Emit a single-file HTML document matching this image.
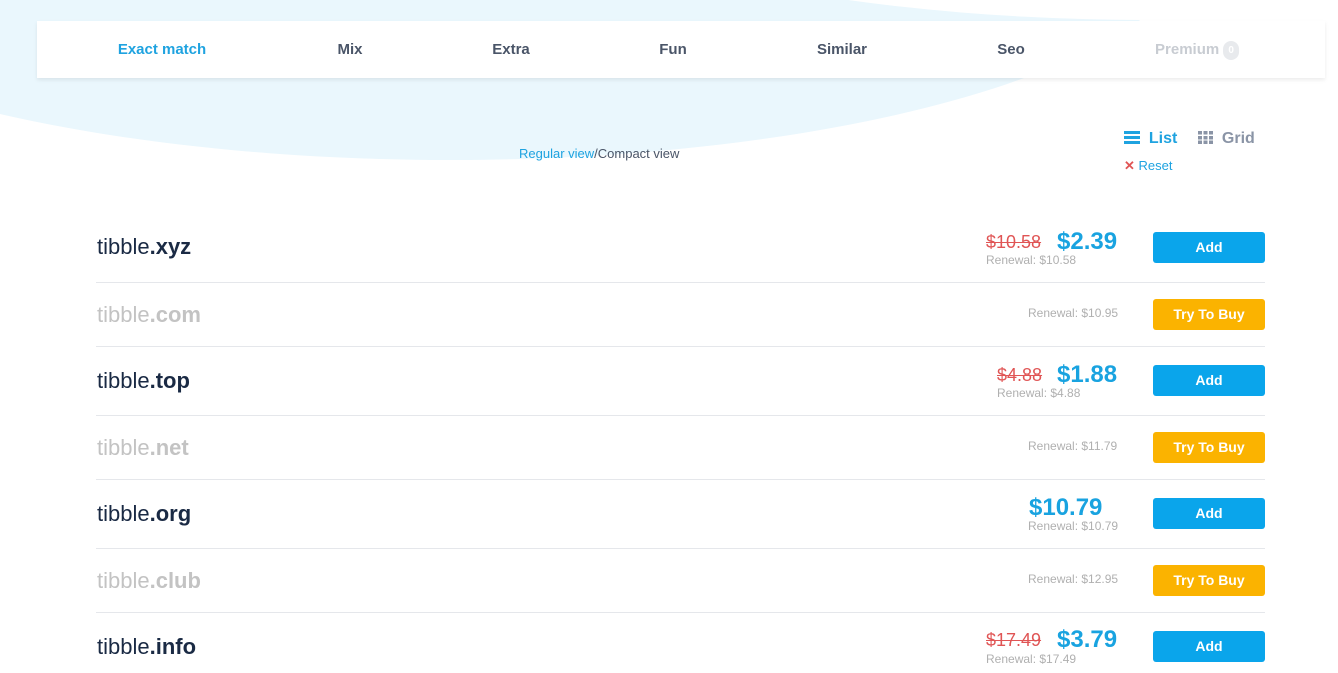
<!DOCTYPE html>
<html><head><style>
body{margin:0;width:1338px;height:664px;overflow:hidden;background:#fff;font-family:"Liberation Sans",sans-serif;position:relative}
.sw{position:absolute;left:-300px;top:-300px;width:1500px;height:460px;border-radius:50%;background:#eaf7fd}
.sw2{position:absolute;left:500px;top:-330px;width:1300px;height:350px;border-radius:50%;background:#fff}
.nav{position:absolute;left:37px;top:21px;width:1288px;height:57px;background:#fff;box-shadow:0 2px 4px rgba(0,0,0,.08)}
.nav span{position:absolute;top:20px;font-size:15px;font-weight:bold;color:#4a5568;transform:translateX(-50%)}
.vt{position:absolute;left:519px;top:146px;font-size:13px;color:#4a5568}
.row{position:absolute;left:96px;width:1169px;border-bottom:1px solid #e5e7eb}
.dn{position:absolute;left:1px;font-size:22px;color:#1a2a44}
.dn b{font-weight:bold}
.dim{color:#c3c3c3}
.btn{position:absolute;left:1057px;width:112px;height:31px;border-radius:3px;color:#fff;font-weight:bold;font-size:14px;text-align:center;line-height:30px}
.add{background:#0aa5eb}.try{background:#fbb300}
.old{position:absolute;font-size:18px;color:#e05555;text-decoration:line-through}
.pr{position:absolute;font-size:24px;font-weight:bold;color:#19a3e0}
.rn{position:absolute;font-size:12px;color:#b0b0b0}
</style></head><body>
<div class="sw"></div><div class="sw2"></div>
<div class="nav">
<span style="left:125px;color:#1fa3e0">Exact match</span>
<span style="left:313px">Mix</span>
<span style="left:474px">Extra</span>
<span style="left:636px">Fun</span>
<span style="left:805px">Similar</span>
<span style="left:974px">Seo</span>
<span style="left:1160px;color:#c8ccd2">Premium <span style="position:static;display:inline-block;transform:none;background:#e8eaed;color:#fff;border-radius:8px;font-size:10px;padding:4px 5px;vertical-align:1px">0</span></span>
</div>
<div class="vt"><span style="color:#1fa3e0">Regular view</span>/Compact view</div>
<div style="position:absolute;left:1124px;top:130px;font-size:16px;font-weight:bold;color:#1fa3e0">
<span style="display:inline-block;width:16px;height:13px;vertical-align:-1px;background:linear-gradient(#1fa3e0 0 3px,transparent 3px 5px,#1fa3e0 5px 8px,transparent 8px 10px,#1fa3e0 10px)"></span>&nbsp; List</div>
<div style="position:absolute;left:1198px;top:130px;font-size:16px;font-weight:bold;color:#8a94a6">
<span style="display:inline-block;width:15px;height:13px;vertical-align:-1px;background:repeating-linear-gradient(90deg,#8a94a6 0 4px,#fff 4px 5.5px),#8a94a6;-webkit-mask:repeating-linear-gradient(#000 0 3.5px,transparent 3.5px 4.8px)"></span>&nbsp; Grid</div>
<div style="position:absolute;left:1124px;top:158px;font-size:13px;color:#1fa3e0"><span style="color:#e05555;font-weight:bold">✕</span> Reset</div>

<div class="row" style="top:215px;height:67px"><div class="dn" style="top:19px">tibble<b>.xyz</b></div>
<div class="old" style="left:890px;top:17px">$10.58</div><div class="pr" style="left:961px;top:13px">$2.39</div><div class="rn" style="left:890px;top:38px">Renewal: $10.58</div>
<div class="btn add" style="top:17px">Add</div></div>
<div class="row" style="top:283px;height:63px"><div class="dn dim" style="top:19px">tibble<b>.com</b></div>
<div class="rn" style="left:932px;top:23px">Renewal: $10.95</div><div class="btn try" style="top:16px">Try To Buy</div></div>
<div class="row" style="top:347px;height:68px"><div class="dn" style="top:21px">tibble<b>.top</b></div>
<div class="old" style="left:901px;top:18px">$4.88</div><div class="pr" style="left:961px;top:14px">$1.88</div><div class="rn" style="left:901px;top:39px">Renewal: $4.88</div>
<div class="btn add" style="top:18px">Add</div></div>
<div class="row" style="top:416px;height:63px"><div class="dn dim" style="top:19px">tibble<b>.net</b></div>
<div class="rn" style="left:932px;top:23px">Renewal: $11.79</div><div class="btn try" style="top:16px">Try To Buy</div></div>
<div class="row" style="top:480px;height:68px"><div class="dn" style="top:21px">tibble<b>.org</b></div>
<div class="pr" style="left:933px;top:14px">$10.79</div><div class="rn" style="left:932px;top:39px">Renewal: $10.79</div>
<div class="btn add" style="top:18px">Add</div></div>
<div class="row" style="top:549px;height:63px"><div class="dn dim" style="top:19px">tibble<b>.club</b></div>
<div class="rn" style="left:932px;top:23px">Renewal: $12.95</div><div class="btn try" style="top:16px">Try To Buy</div></div>
<div class="row" style="top:613px;height:60px;border:none"><div class="dn" style="top:21px">tibble<b>.info</b></div>
<div class="old" style="left:890px;top:17px">$17.49</div><div class="pr" style="left:961px;top:13px">$3.79</div><div class="rn" style="left:890px;top:39px">Renewal: $17.49</div>
<div class="btn add" style="top:18px">Add</div></div>
</body></html>
